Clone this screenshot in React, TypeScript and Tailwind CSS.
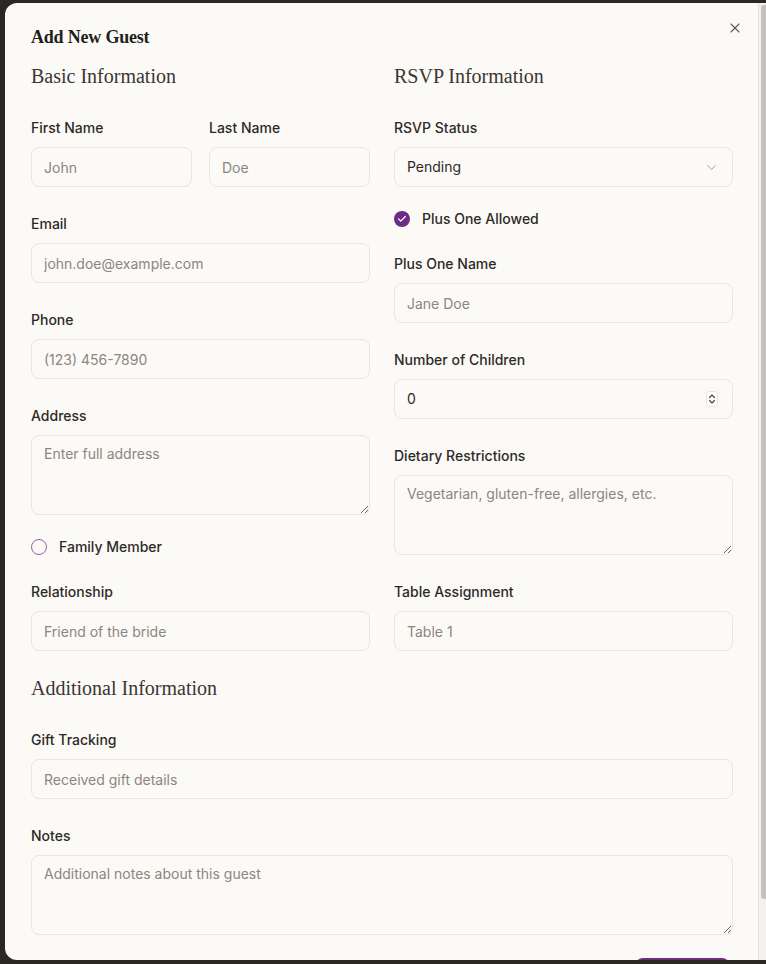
import React from "react";
import { X, ChevronDown, Check } from "lucide-react";

const inter = { fontFamily: "Inter, 'Noto Sans', sans-serif" };

function Label({ children }: { children: React.ReactNode }) {
  return (
    <div className="h-[21px] pt-px text-sm leading-5 font-medium text-[#2d2a26]">{children}</div>
  );
}

function TextInput({ placeholder }: { placeholder: string }) {
  return (
    <input
      readOnly
      placeholder={placeholder}
      className="mt-[9px] block h-10 w-full rounded-lg border border-[#e9e5e0] bg-transparent px-3 text-sm text-[#2d2a26] outline-none placeholder:text-[#8b8680]"
    />
  );
}

function Area({ placeholder }: { placeholder: string }) {
  return (
    <textarea
      readOnly
      placeholder={placeholder}
      className="mt-[9px] block h-20 w-full rounded-lg border border-[#e9e5e0] bg-transparent px-3 py-2 text-sm leading-5 text-[#2d2a26] outline-none placeholder:text-[#8b8680]"
    />
  );
}

function Field({
  label,
  placeholder,
  area,
  className,
}: {
  label: string;
  placeholder: string;
  area?: boolean;
  className?: string;
}) {
  return (
    <div className={className}>
      <Label>{label}</Label>
      {area ? <Area placeholder={placeholder} /> : <TextInput placeholder={placeholder} />}
    </div>
  );
}

function Heading({ children }: { children: React.ReactNode }) {
  return (
    <div
      className="h-7 text-[20px] leading-7 text-[#3a3632]"
      style={{ fontFamily: "'Liberation Serif', 'DejaVu Serif', serif" }}
    >
      {children}
    </div>
  );
}

export default function App() {
  return (
    <div className="relative h-[964px] w-[766px] overflow-hidden bg-[#2b2723]" style={inter}>
      <div className="absolute left-[5px] top-[3px] flex h-[957px] w-[761px] overflow-hidden rounded-l-[12px] bg-[#fcfaf7]">
        <div className="relative flex-1 overflow-hidden pl-[26px] pr-[25px] pt-[20px]">
          <button className="absolute right-[15px] top-[17px] text-[#5f5a55]">
            <X size={16} strokeWidth={1.6} />
          </button>
          <div
            className="h-7 text-[18px] font-bold leading-7 tracking-[-0.2px] text-[#221f1c]"
            style={{ fontFamily: "'Liberation Serif', 'DejaVu Serif', serif" }}
          >
            Add New Guest
          </div>

          <div className="mt-[11px] grid grid-cols-2 gap-x-[24px]">
            {/* Left column */}
            <div className="flex flex-col">
              <Heading>Basic Information</Heading>
              <div className="mt-[27px] grid grid-cols-2 gap-x-[17px]">
                <Field label="First Name" placeholder="John" />
                <Field label="Last Name" placeholder="Doe" />
              </div>
              <Field className="mt-[26px]" label="Email" placeholder="john.doe@example.com" />
              <Field className="mt-[26px]" label="Phone" placeholder="(123) 456-7890" />
              <Field className="mt-[26px]" label="Address" placeholder="Enter full address" area />
              <div className="mt-[22px] flex h-5 items-center gap-3">
                <span className="h-4 w-4 rounded-full border-[1.5px] border-[#9a5cae]" />
                <span className="text-sm font-medium text-[#2d2a26]">Family Member</span>
              </div>
              <Field className="mt-[24px]" label="Relationship" placeholder="Friend of the bride" />
            </div>

            {/* Right column */}
            <div className="flex flex-col">
              <Heading>RSVP Information</Heading>
              <div className="mt-[27px]">
                <Label>RSVP Status</Label>
                <div className="mt-[9px] flex h-10 w-full items-center justify-between rounded-lg border border-[#e9e5e0] pl-3 pr-[13px] text-sm text-[#2d2a26]">
                  <span>Pending</span>
                  <ChevronDown size={15} strokeWidth={1.5} className="text-[#9d9791]" />
                </div>
              </div>
              <div className="mt-[22px] flex h-5 items-center gap-3">
                <span className="flex h-4 w-4 items-center justify-center rounded-full bg-[#6b2c87]">
                  <Check size={10} strokeWidth={3} className="text-white" />
                </span>
                <span className="text-sm font-medium text-[#2d2a26]">Plus One Allowed</span>
              </div>
              <Field className="mt-[24px]" label="Plus One Name" placeholder="Jane Doe" />
              <div className="mt-[26px]">
                <Label>Number of Children</Label>
                <div className="mt-[9px] flex h-10 w-full items-center justify-between rounded-lg border border-[#e9e5e0] pl-3 pr-[14px] text-sm text-[#2d2a26]">
                  <span>0</span>
                  <span className="flex h-4 w-3 flex-col items-center justify-center rounded-[3px] border border-[#e6e2de] bg-white">
                    <svg width="8" height="12" viewBox="0 0 8 12" fill="none" stroke="#4a4643" strokeWidth="1.2" strokeLinecap="round" strokeLinejoin="round">
                      <path d="M1.5 4.5 L4 2 L6.5 4.5" />
                      <path d="M1.5 7.5 L4 10 L6.5 7.5" />
                    </svg>
                  </span>
                </div>
              </div>
              <Field
                className="mt-[26px]"
                label="Dietary Restrictions"
                placeholder="Vegetarian, gluten-free, allergies, etc."
                area
              />
              <Field className="mt-[26px]" label="Table Assignment" placeholder="Table 1" />
            </div>
          </div>

          <div className="mt-[23px]">
            <Heading>Additional Information</Heading>
          </div>
          <Field className="mt-[27px]" label="Gift Tracking" placeholder="Received gift details" />
          <Field className="mt-[26px]" label="Notes" placeholder="Additional notes about this guest" area />
          <div className="mt-[23px] flex justify-end pr-[3px]">
            <div className="h-10 w-[95px] rounded-lg bg-[#6b2c87]" />
          </div>
        </div>

        {/* scrollbar */}
        <div className="relative w-[8px] border-l border-[#e6e3df] bg-[#f4f2ef]">
          <div className="absolute right-0 top-[2px] h-[894px] w-[5px] rounded-l-[3px] bg-[#c3c1bf]" />
        </div>
      </div>
    </div>
  );
}
